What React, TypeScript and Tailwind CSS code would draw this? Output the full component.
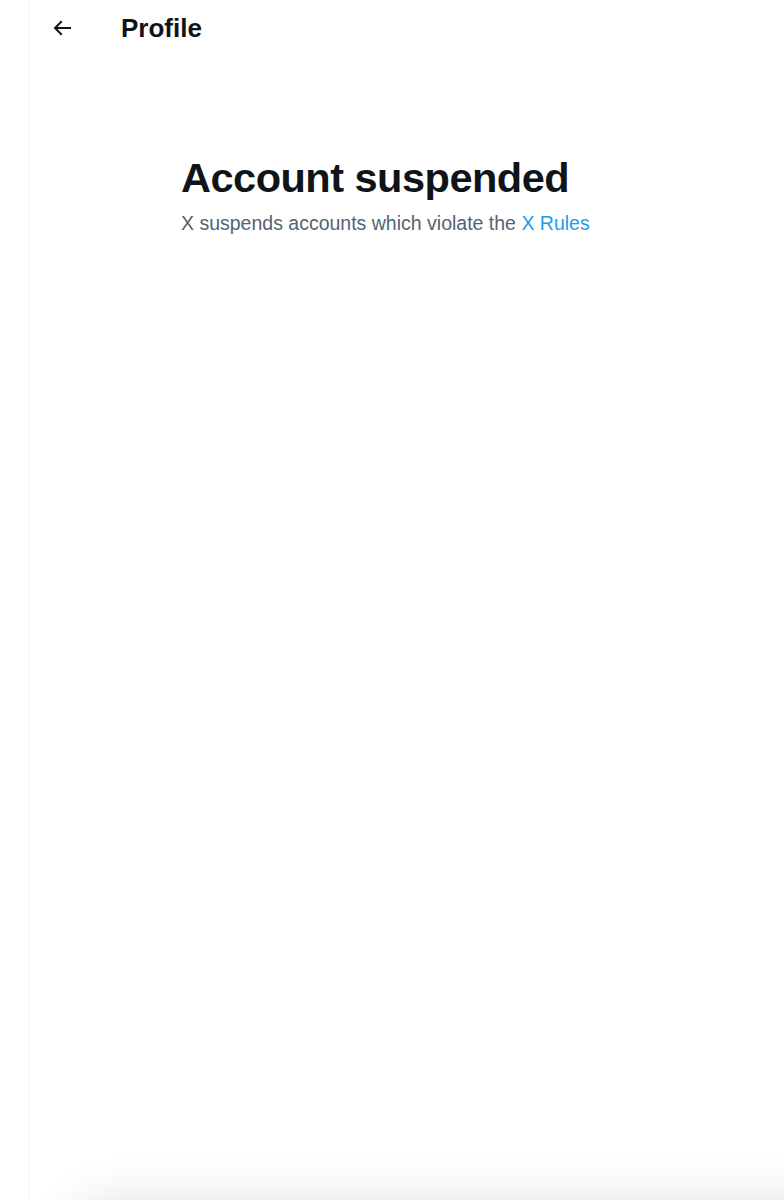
import React from 'react';

const BackArrow = () => (
  <svg viewBox="0 0 24 24" className="w-[24px] h-[24px] fill-[#0f1419]">
    <path d="M7.414 13l5.043 5.04-1.414 1.42L3.586 12l7.457-7.46 1.414 1.42L7.414 11H21v2H7.414z" />
  </svg>
);

export default function App() {
  return (
    <div className="relative h-[1200px] w-[784px] overflow-hidden bg-white font-['Liberation_Sans',sans-serif]">
      <div className="ml-[28px] h-full border-l border-[#eff3f4]">
        {/* header */}
        <div className="flex h-[56px] items-center">
          <div className="ml-[21px] flex w-[71px] items-center">
            <BackArrow />
          </div>
          <h1 className="text-[26px] font-bold leading-none text-[#0f1419]">Profile</h1>
        </div>

        {/* suspended message */}
        <div className="ml-[152px] mt-[98px]">
          <h2 className="text-[41.5px] font-bold leading-[48px] tracking-[-0.5px] text-[#0f1419]">
            Account suspended
          </h2>
          <p className="mt-[9px] text-[19.5px] leading-[24px] text-[#536471]">
            X suspends accounts which violate the <span className="text-[#1d9bf0]">X Rules</span>
          </p>
        </div>
      </div>

      {/* shadow from sheet below */}
      <div className="absolute left-[60px] right-[-40px] top-[1200px] h-[200px] rounded-tl-[60px] bg-white shadow-[0_0_50px_rgba(0,0,0,0.12)]" />
    </div>
  );
}
